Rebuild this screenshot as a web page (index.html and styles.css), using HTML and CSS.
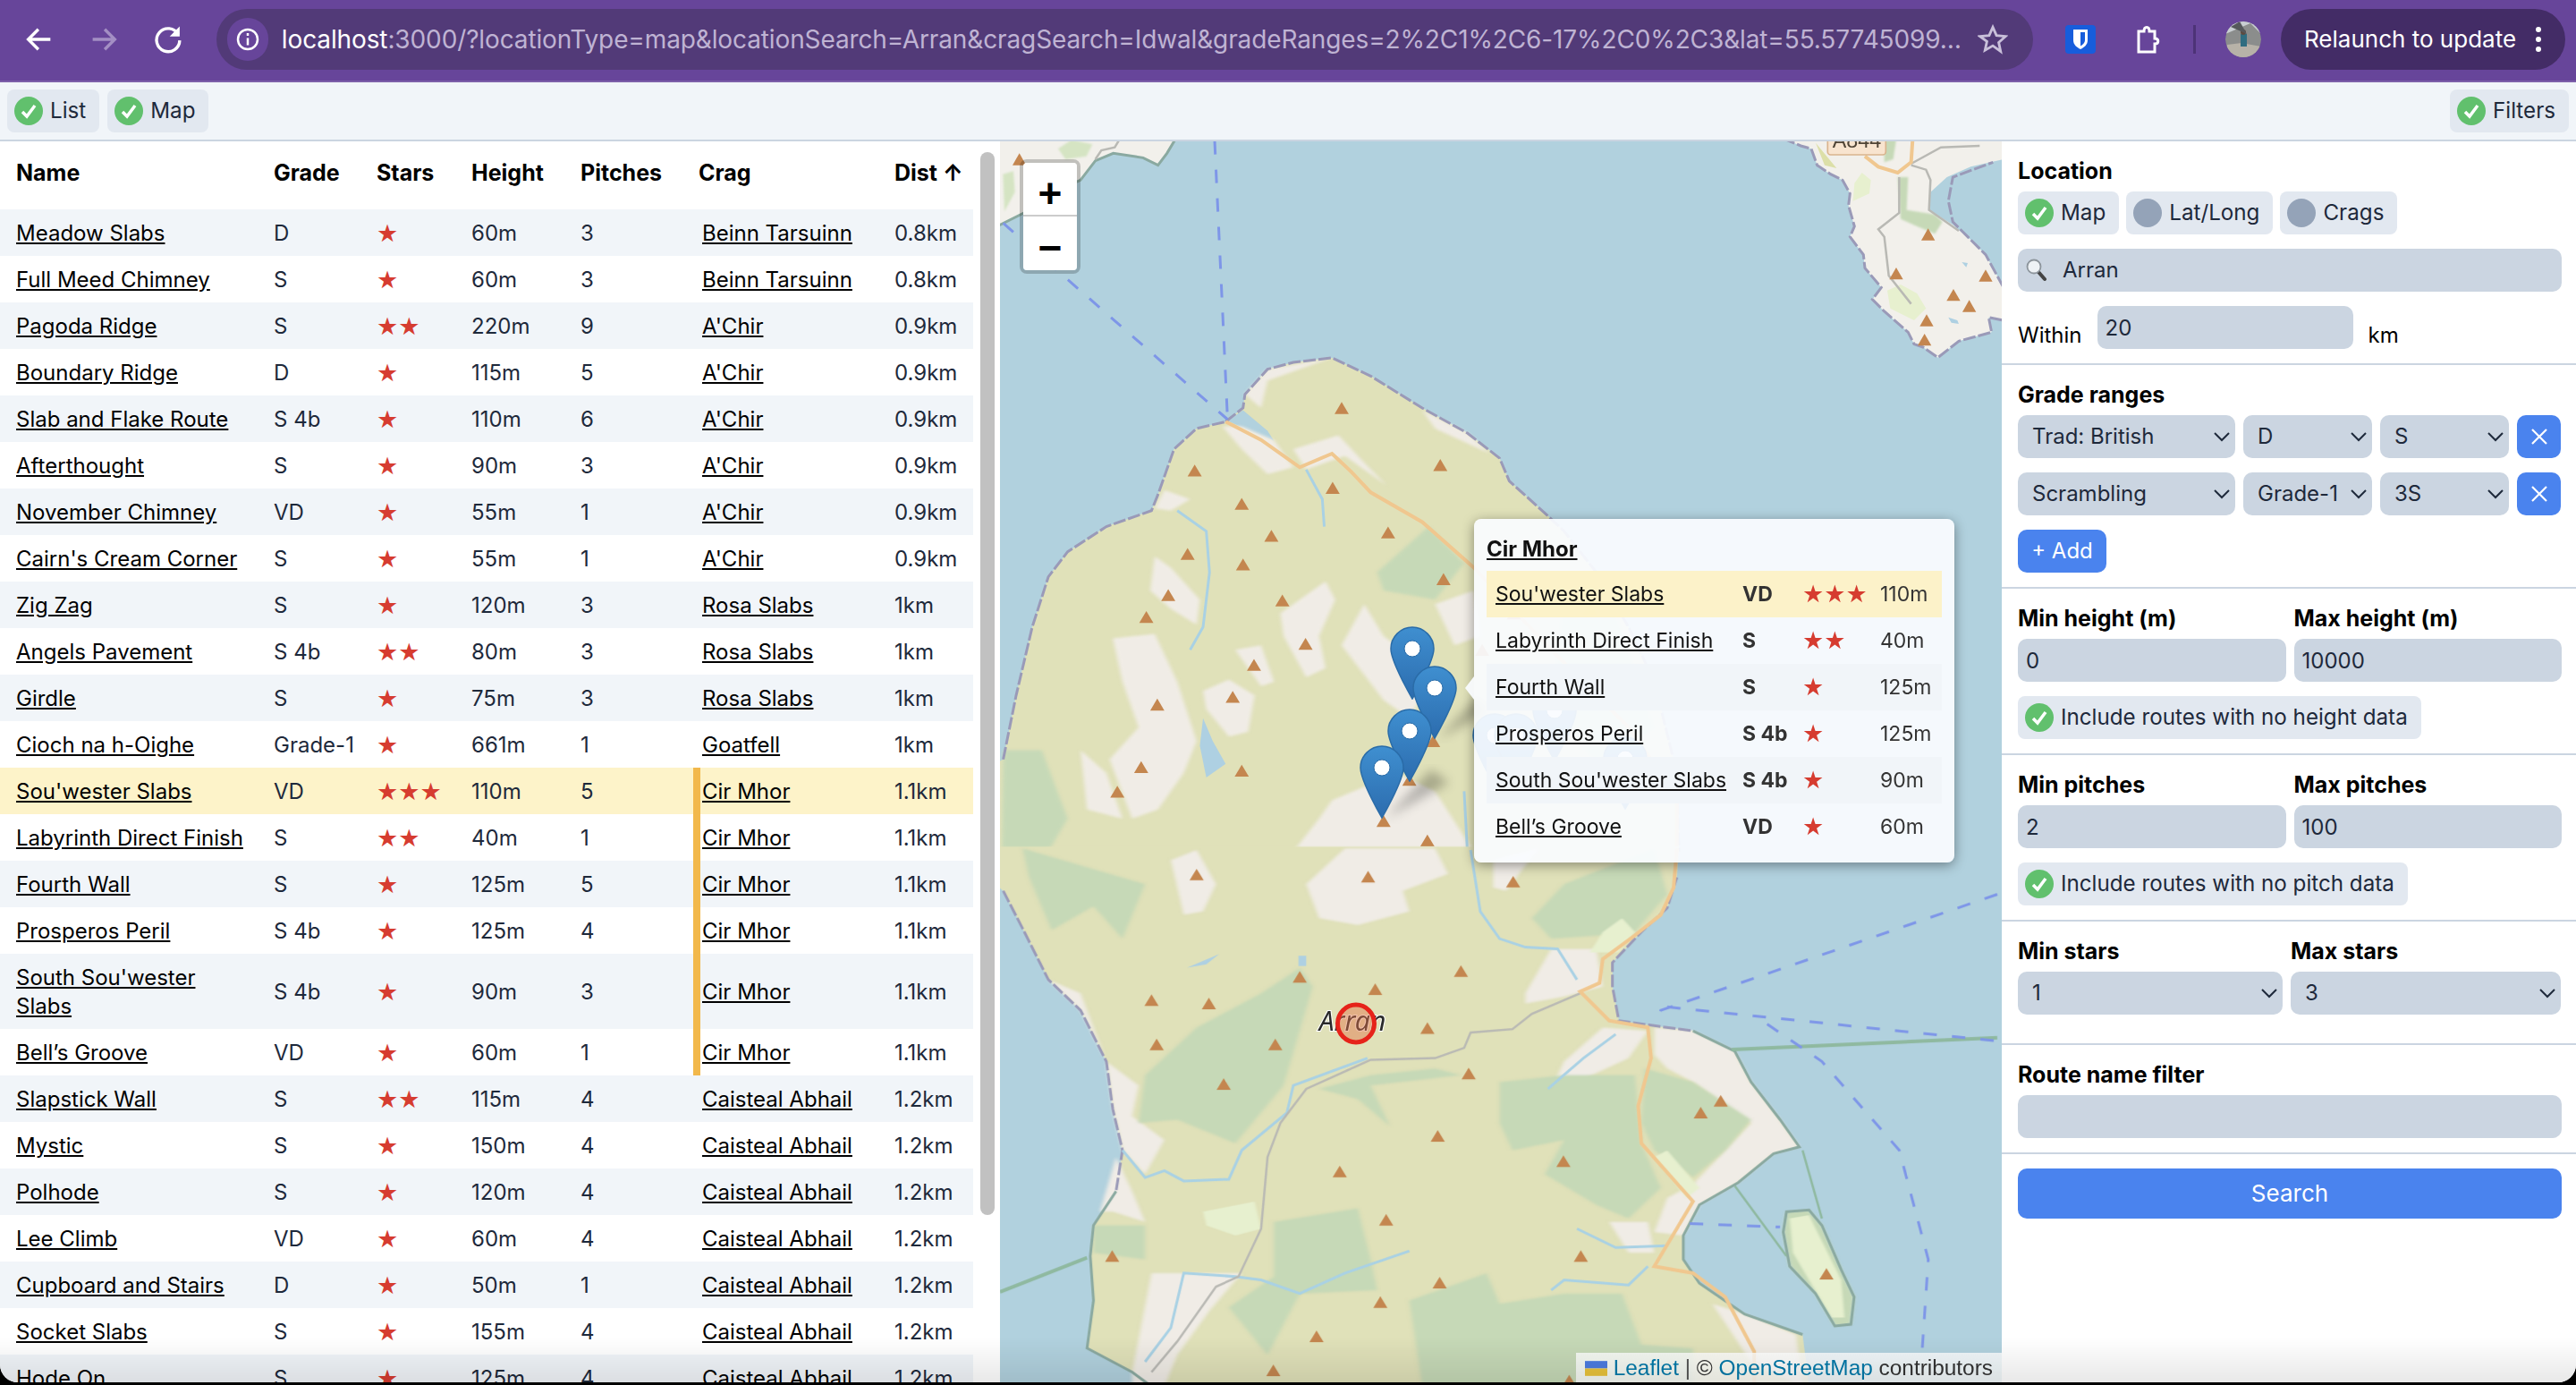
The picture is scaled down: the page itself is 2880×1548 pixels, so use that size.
FILE: index.html
```html
<!DOCTYPE html>
<html lang="en">
<head>
    <meta charset="UTF-8">
    <title>Route search</title>
    <link rel="stylesheet" href="styles.css">
</head>
<body>
    <!-- browser bar -->
    <div class="chrome">
        <svg class="nav-icon" viewBox="0 0 32 32"><path d="M27 16H6M15 6L5 16l10 10"/></svg>
        <svg class="nav-icon dim" viewBox="0 0 32 32"><path d="M5 16h21M17 6l10 10-10 10"/></svg>
        <svg class="nav-icon" viewBox="0 0 32 32"><path d="M26 11a11.5 11.5 0 1 0 1.5 6"/><path class="solid" d="M27.500 3v10h-10z"/></svg>
        <div class="urlbar">
            <span class="site-info"><svg viewBox="0 0 28 28"><circle cx="14" cy="14" r="11"/><path d="M14 12.500v8M14 7v3"/></svg></span>
            <span class="url"><b>localhost</b>:3000/?locationType=map&amp;locationSearch=Arran&amp;cragSearch=Idwal&amp;gradeRanges=2%2C1%2C6-17%2C0%2C3&amp;lat=55.57745099…</span>
            <svg class="star-icon" viewBox="0 0 30 30"><path d="M15 3l3.600 8.200 8.900.9-6.700 5.900 1.900 8.800L15 21.300 7.300 25.800 9.200 17 2.500 12.100l8.900-.9z"/></svg>
        </div>
        <svg class="ext-shield" viewBox="0 0 34 32"><rect width="34" height="32" rx="4"/><path d="M9 5h16v12c0 5-4 8-8 10-4-2-8-5-8-10z"/><path class="inner" d="M17 8h5v9c0 3-2.500 5-5 6.500z"/></svg>
        <svg class="ext-puzzle" viewBox="0 0 32 34"><path d="M6 8h6c0-6 6-6 6 0h6v8c5 0 5 6 0 6v9H6z"/></svg>
        <span class="chrome-sep"></span>
        <svg class="avatar" viewBox="0 0 40 40">
            <circle cx="20" cy="20" r="20" fill="#8b8d8c"/>
            <path d="M0 14L28 2l12 12v-14H0z" fill="#c9ced2"/>
            <path d="M2 26l16-2 22 4v12H0z" fill="#b7b2a8"/>
            <rect x="17" y="14" width="7" height="14" fill="#2f6d80"/>
            <circle cx="20" cy="12" r="3" fill="#5d4a3e"/>
            <path d="M6 6l18 8-8-14z" fill="#55585b"/>
        </svg>
        <div class="relaunch">
            <span>Relaunch to update</span>
            <svg viewBox="0 0 8 32"><circle cx="4" cy="5" r="3"/><circle cx="4" cy="16" r="3"/><circle cx="4" cy="27" r="3"/></svg>
        </div>
    </div>

    <!-- view toggles -->
    <div class="toolbar">
        <button class="toggle"><svg class="tick" viewBox="0 0 32 32"><circle cx="16" cy="16" r="16"/><path d="M9 17l5 5 9-12"/></svg>List</button>
        <button class="toggle"><svg class="tick" viewBox="0 0 32 32"><circle cx="16" cy="16" r="16"/><path d="M9 17l5 5 9-12"/></svg>Map</button>
        <button class="toggle push-right"><svg class="tick" viewBox="0 0 32 32"><circle cx="16" cy="16" r="16"/><path d="M9 17l5 5 9-12"/></svg>Filters</button>
    </div>

    <div class="main">
        <!-- results list -->
        <div class="list-pane">
            <table class="routes">
                <colgroup>
                    <col class="c-name"><col class="c-grade"><col class="c-stars"><col class="c-height"><col class="c-pitches"><col class="c-crag"><col class="c-dist">
                </colgroup>
                <thead>
                    <tr><th class="first">Name</th><th>Grade</th><th>Stars</th><th>Height</th><th>Pitches</th><th class="crag-head">Crag</th><th>Dist ↑</th></tr>
                </thead>
                <tbody>
                    <tr><td class="first"><a href="#">Meadow Slabs</a></td><td>D</td><td class="stars">★</td><td>60m</td><td>3</td><td class="crag"><a href="#">Beinn Tarsuinn</a></td><td>0.8km</td></tr>
                    <tr><td class="first"><a href="#">Full Meed Chimney</a></td><td>S</td><td class="stars">★</td><td>60m</td><td>3</td><td class="crag"><a href="#">Beinn Tarsuinn</a></td><td>0.8km</td></tr>
                    <tr><td class="first"><a href="#">Pagoda Ridge</a></td><td>S</td><td class="stars">★★</td><td>220m</td><td>9</td><td class="crag"><a href="#">A'Chir</a></td><td>0.9km</td></tr>
                    <tr><td class="first"><a href="#">Boundary Ridge</a></td><td>D</td><td class="stars">★</td><td>115m</td><td>5</td><td class="crag"><a href="#">A'Chir</a></td><td>0.9km</td></tr>
                    <tr><td class="first"><a href="#">Slab and Flake Route</a></td><td>S 4b</td><td class="stars">★</td><td>110m</td><td>6</td><td class="crag"><a href="#">A'Chir</a></td><td>0.9km</td></tr>
                    <tr><td class="first"><a href="#">Afterthought</a></td><td>S</td><td class="stars">★</td><td>90m</td><td>3</td><td class="crag"><a href="#">A'Chir</a></td><td>0.9km</td></tr>
                    <tr><td class="first"><a href="#">November Chimney</a></td><td>VD</td><td class="stars">★</td><td>55m</td><td>1</td><td class="crag"><a href="#">A'Chir</a></td><td>0.9km</td></tr>
                    <tr><td class="first"><a href="#">Cairn's Cream Corner</a></td><td>S</td><td class="stars">★</td><td>55m</td><td>1</td><td class="crag"><a href="#">A'Chir</a></td><td>0.9km</td></tr>
                    <tr><td class="first"><a href="#">Zig Zag</a></td><td>S</td><td class="stars">★</td><td>120m</td><td>3</td><td class="crag"><a href="#">Rosa Slabs</a></td><td>1km</td></tr>
                    <tr><td class="first"><a href="#">Angels Pavement</a></td><td>S 4b</td><td class="stars">★★</td><td>80m</td><td>3</td><td class="crag"><a href="#">Rosa Slabs</a></td><td>1km</td></tr>
                    <tr><td class="first"><a href="#">Girdle</a></td><td>S</td><td class="stars">★</td><td>75m</td><td>3</td><td class="crag"><a href="#">Rosa Slabs</a></td><td>1km</td></tr>
                    <tr><td class="first"><a href="#">Cioch na h-Oighe</a></td><td>Grade-1</td><td class="stars">★</td><td>661m</td><td>1</td><td class="crag"><a href="#">Goatfell</a></td><td>1km</td></tr>
                    <tr class="picked"><td class="first"><a href="#">Sou'wester Slabs</a></td><td>VD</td><td class="stars">★★★</td><td>110m</td><td>5</td><td class="crag on"><a href="#">Cir Mhor</a></td><td>1.1km</td></tr>
                    <tr><td class="first"><a href="#">Labyrinth Direct Finish</a></td><td>S</td><td class="stars">★★</td><td>40m</td><td>1</td><td class="crag on"><a href="#">Cir Mhor</a></td><td>1.1km</td></tr>
                    <tr><td class="first"><a href="#">Fourth Wall</a></td><td>S</td><td class="stars">★</td><td>125m</td><td>5</td><td class="crag on"><a href="#">Cir Mhor</a></td><td>1.1km</td></tr>
                    <tr><td class="first"><a href="#">Prosperos Peril</a></td><td>S 4b</td><td class="stars">★</td><td>125m</td><td>4</td><td class="crag on"><a href="#">Cir Mhor</a></td><td>1.1km</td></tr>
                    <tr><td class="first"><a href="#">South Sou'wester Slabs</a></td><td>S 4b</td><td class="stars">★</td><td>90m</td><td>3</td><td class="crag on"><a href="#">Cir Mhor</a></td><td>1.1km</td></tr>
                    <tr><td class="first"><a href="#">Bell’s Groove</a></td><td>VD</td><td class="stars">★</td><td>60m</td><td>1</td><td class="crag on"><a href="#">Cir Mhor</a></td><td>1.1km</td></tr>
                    <tr><td class="first"><a href="#">Slapstick Wall</a></td><td>S</td><td class="stars">★★</td><td>115m</td><td>4</td><td class="crag"><a href="#">Caisteal Abhail</a></td><td>1.2km</td></tr>
                    <tr><td class="first"><a href="#">Mystic</a></td><td>S</td><td class="stars">★</td><td>150m</td><td>4</td><td class="crag"><a href="#">Caisteal Abhail</a></td><td>1.2km</td></tr>
                    <tr><td class="first"><a href="#">Polhode</a></td><td>S</td><td class="stars">★</td><td>120m</td><td>4</td><td class="crag"><a href="#">Caisteal Abhail</a></td><td>1.2km</td></tr>
                    <tr><td class="first"><a href="#">Lee Climb</a></td><td>VD</td><td class="stars">★</td><td>60m</td><td>4</td><td class="crag"><a href="#">Caisteal Abhail</a></td><td>1.2km</td></tr>
                    <tr><td class="first"><a href="#">Cupboard and Stairs</a></td><td>D</td><td class="stars">★</td><td>50m</td><td>1</td><td class="crag"><a href="#">Caisteal Abhail</a></td><td>1.2km</td></tr>
                    <tr><td class="first"><a href="#">Socket Slabs</a></td><td>S</td><td class="stars">★</td><td>155m</td><td>4</td><td class="crag"><a href="#">Caisteal Abhail</a></td><td>1.2km</td></tr>
                    <tr><td class="first"><a href="#">Hode On</a></td><td>S</td><td class="stars">★</td><td>125m</td><td>4</td><td class="crag"><a href="#">Caisteal Abhail</a></td><td>1.2km</td></tr>
                </tbody>
            </table>
            <div class="gutter"><div class="thumb"></div></div>
        </div>

        <!-- map -->
        <div class="map">
            <svg class="tiles" viewBox="1118 158 1120 1388">
                <defs>
                    <path id="t5" d="M0-13L11 13H-11Z"/>
                    <path id="t6" d="M0-17L11 17H-11Z"/>
                    <path id="t3" d="M0-20L23 20H-23Z"/>
                    <linearGradient id="pinfill" x1="0" y1="0" x2="0" y2="1">
                        <stop offset="0" stop-color="#3f8fd0"/>
                        <stop offset="1" stop-color="#2c6cae"/>
                    </linearGradient>
                    <symbol id="pin" viewBox="0 0 50 82" width="50" height="82">
                        <path fill="url(#pinfill)" stroke="#2a6ca8" stroke-width="1.500" d="M25 1C12 1 1 12 1 25c0 15 24 56 24 56s24-41 24-56C49 12 38 1 25 1z"/>
                        <circle cx="25" cy="25" r="9" fill="#fff" stroke="#2a6ca8"/>
                    </symbol>
                    <filter id="soft"><feGaussianBlur stdDeviation="6"/></filter>
                </defs>
                <rect x="1118" y="158" width="1120" height="1388" fill="#b1d1de"/>

                <!-- land in the top left corner -->
                <g class="tile" transform="translate(1118,158) scale(.3333)">
                    <polygon class="shore" points="-10,-10 590,-10 560,40 530,80 480,55 380,40 320,65 270,130 180,170 80,240 -10,285"/>
                    <polygon class="pale-wood" points="195,25 240,-5 310,10 290,50 220,60"/>
                    <polygon class="pale-wood" points="10,110 45,100 50,170 15,235"/>
                    <polyline class="coast-line" points="590,-10 560,40 530,80 480,55 380,40 320,65 270,130 180,170 80,240 -10,285"/>
                    <polyline class="track" points="320,60 340,30 385,20 400,-5"/>
                    <use href="#t3" x="65" y="60"/>
                </g>

                <!-- Bute -->
                <g class="tile" transform="translate(1950,158) scale(.3333)">
                    <polygon class="shore" points="130,-10 190,15 225,25 245,80 290,110 330,130 355,175 350,215 370,285 355,320 400,380 405,425 460,490 430,530 470,570 550,640 570,680 600,690 650,725 720,670 830,640 820,590 870,600 870,490 810,380 760,330 700,280 620,230 625,170 680,120 760,85 870,60 870,-10"/>
                    <polygon class="wood" points="515,120 550,120 545,230 640,245 665,270 640,310 580,285 525,260"/>
                    <polygon class="wood" points="470,-5 510,-5 500,60 470,70"/>
                    <polygon class="pale" points="370,140 395,105 425,130 420,175 365,200"/>
                    <polygon class="pale" points="480,500 525,480 580,510 610,560 570,600 490,560"/>
                    <polygon class="moor" points="240,5 310,90 270,80"/>
                    <polygon class="tarn" points="685,590 715,600 720,612 695,608"/>
                    <polygon class="tarn" points="730,405 750,408 745,422"/>
                    <polyline class="coast-line purple" points="130,-10 190,15 225,25 245,80 290,110 330,130 355,175 350,215 370,285 355,320 400,380 405,425 460,490 430,530 470,570 550,640 570,680 600,690 650,725 720,670 830,640 820,590 870,600"/>
                    <polyline class="coast-line purple" points="870,490 810,380 760,330 700,270 685,200 700,120 835,70"/>
                    <polyline class="track" points="560,80 610,95 625,130 620,230 720,300"/>
                    <polyline class="track" points="520,120 520,240 450,295 470,320 485,450 560,545"/>
                    <polyline class="track" points="560,75 660,20 790,15"/>
                    <polyline class="road" points="405,50 450,85 515,105 560,70 565,-5"/>
                    <rect class="shield" x="280" y="-50" width="195" height="95" rx="10"/>
                    <text class="shield-text" x="378" y="22">A844</text>
                    <use href="#t3" x="617" y="312"/><use href="#t3" x="510" y="443"/><use href="#t3" x="810" y="450"/><use href="#t3" x="702" y="515"/>
                    <use href="#t3" x="755" y="552"/><use href="#t3" x="612" y="600"/><use href="#t3" x="605" y="665"/>
                </g>

                <!-- upper half of the island -->
                <g class="tile" transform="translate(1100,150) scale(.7207,.51)">
                    <polygon class="land" points="375,630 402,600 405,570 440,515 480,500 540,490 600,530 680,600 750,655 800,710 815,760 870,830 900,870 950,960 1000,1080 1040,1200 1075,1400 1078,1572 -10,1572 -10,1400 30,1370 50,1230 75,1080 100,970 130,915 190,860 260,825 270,790 295,690 330,645"/>
                    <polygon class="sea" points="378,628 402,605 440,650 450,672 420,655"/>
                    <polygon class="rock" points="405,570 440,515 540,490 500,510 440,540 430,600"/>
                    <polygon class="rock" points="680,605 750,655 785,700 700,645"/>
                    <polygon class="rock" points="480,690 550,660 590,720 625,770 560,705 500,735"/>
                    <polygon class="rock" points="400,640 450,670 480,730 440,745 400,690 370,640"/>
                    <polygon class="rock" points="280,780 320,800 290,825 265,820"/>
                    <polygon class="rock" points="265,925 290,950 335,1020 330,1075 290,1040 258,1000"/>
                    <polygon class="rock" points="200,1105 265,1095 300,1200 330,1330 310,1400 270,1480 230,1500 195,1370 240,1300 215,1200"/>
                    <polygon class="rock" points="340,1220 380,1195 420,1230 410,1310 380,1320 345,1260"/>
                    <polygon class="rock" points="390,1130 430,1120 450,1200 430,1210"/>
                    <polygon class="rock" points="460,1050 530,980 545,1020 520,1100 530,1170 500,1190 465,1100"/>
                    <polygon class="rock" points="555,1120 590,1030 620,1100 700,1180 660,1280 620,1240"/>
                    <polygon class="rock" points="150,1350 190,1400 215,1500 160,1480"/>
                    <polygon class="rock" points="540,1460 640,1400 700,1440 760,1572 480,1572 520,1500"/>
                    <polygon class="rock" points="700,1030 760,1000 770,1100 730,1120"/>
                    <polygon class="wood" points="610,960 690,860 745,940 700,1020 620,1000"/>
                    <polygon class="wood" points="30,1350 90,1350 130,1500 100,1572 28,1572"/>
                    <polygon class="wood" points="900,1000 960,960 1040,1300 960,1400 880,1250"/>
                    <polyline class="coast-line purple" points="375,630 402,600 405,570 440,515 480,500 540,490 600,530 680,600 750,655 800,710 815,760 870,830 900,870 950,960 1000,1080 1040,1200 1075,1400 1078,1572"/>
                    <polyline class="coast-line purple" points="30,1370 50,1230 75,1080 100,970 130,915 190,860 260,825 270,790 295,690 330,645 375,630"/>
                    <polyline class="river" points="300,825 345,870 350,960 340,1080 320,1130"/>
                    <polyline class="river" points="500,735 525,800 528,860"/>
                    <polygon class="tarn" points="340,1280 355,1330 375,1380 345,1410 335,1340"/>
                    <polyline class="road" points="375,630 430,670 490,730 540,700 570,740 600,785 680,850 760,950 880,1130 1000,1300 1075,1450 1075,1572"/>
                    <polyline class="river" points="745,1440 750,1572"/>
                    <polyline class="ferry" points="358,15 378,625"/>
                    <polyline class="ferry" points="30,195 378,625"/>
                    <use href="#t5" x="555" y="600"/><use href="#t5" x="708" y="725"/><use href="#t5" x="327" y="737"/><use href="#t5" x="541" y="775"/>
                    <use href="#t5" x="400" y="810"/><use href="#t5" x="627" y="873"/><use href="#t5" x="446" y="880"/><use href="#t5" x="316" y="920"/>
                    <use href="#t5" x="402" y="943"/><use href="#t5" x="713" y="975"/><use href="#t5" x="286" y="1010"/><use href="#t5" x="463" y="1022"/>
                    <use href="#t5" x="252" y="1058"/><use href="#t5" x="499" y="1117"/><use href="#t5" x="419" y="1163"/><use href="#t5" x="269" y="1250"/>
                    <use href="#t5" x="386" y="1233"/><use href="#t5" x="400" y="1395"/><use href="#t5" x="244" y="1387"/><use href="#t5" x="207" y="1441"/>
                    <use href="#t5" x="697" y="1330"/><use href="#t5" x="660" y="1415"/><use href="#t5" x="620" y="1505"/><use href="#t5" x="688" y="1548"/>
                    <use href="#t5" x="773" y="1130"/><use href="#t5" x="822" y="1050"/><use href="#t5" x="940" y="1040"/>
                </g>

                <!-- lower half of the island -->
                <g class="tile" transform="translate(1100,950) scale(.7207,.3814)">
                    <polygon class="land" points="-10,-10 1078,-10 1075,80 1060,170 1020,240 975,330 975,400 985,500 1040,515 1100,530 1165,590 1190,680 1235,790 1265,870 1225,890 1170,975 1110,1040 1085,1130 1085,1200 1110,1270 1180,1360 1270,1420 1280,1572 260,1572 230,1530 160,1460 170,1320 165,1190 170,1100 205,1000 215,880 200,760 190,620 150,470 100,380 60,230 30,120 -10,60"/>
                    <polygon class="rock" points="290,30 330,0 360,100 340,180 310,190"/>
                    <polygon class="rock" points="500,100 560,-5 700,-5 720,70 650,120 660,180 580,220 520,200"/>
                    <polygon class="rock" points="790,30 860,-5 810,120 790,110"/>
                    <polygon class="rock" points="100,380 150,420 190,620 240,690 230,780 280,850 250,950 215,880 200,760 190,620 150,470"/>
                    <polygon class="rock" points="260,1240 400,1240 350,1350 300,1480 280,1572 230,1572 230,1530"/>
                    <polygon class="rock" points="880,290 950,290 960,400 900,430 840,450 840,420"/>
                    <polygon class="rock" points="205,900 230,1000 250,1090 200,1060 180,1060"/>
                    <polygon class="rock" points="960,520 1030,530 1000,610 920,680 880,700 900,620"/>
                    <polygon class="rock" points="1040,520 1100,530 1165,590 1190,680 1235,790 1265,870 1225,890 1170,975 1110,1040 1085,1130 1040,1120 1060,1020 1100,980 1150,880 1190,800 1100,680 1060,640 1040,600"/>
                    <polygon class="rock" points="970,1090 1030,1090 1040,1180 1000,1180"/>
                    <polygon class="rock" points="1130,1330 1180,1360 1260,1420 1270,1572 1190,1500"/>
                    <polygon class="wood" points="60,-5 250,100 215,260 170,165 105,235 70,80"/>
                    <polygon class="wood" points="490,345 510,400 465,690 390,860 300,790 240,800 250,660 330,520 430,420"/>
                    <polygon class="wood" points="900,100 1040,-5 1060,130 1010,240 960,250 880,260 850,200"/>
                    <polygon class="wood" points="800,680 900,660 1010,660 1020,860 1050,990 1000,1080 950,1040 870,950 900,850 820,880 800,800"/>
                    <polygon class="wood" points="1025,640 1100,680 1190,790 1150,880 1100,960 1040,880 1020,800"/>
                    <polygon class="wood" points="450,1090 580,1050 600,1200 610,1290 490,1300 440,1480 380,1340 450,1250"/>
                    <polygon class="wood" points="660,1320 780,1240 800,1330 900,1300 990,1300 1020,1450 1100,1460 1100,1572 680,1572"/>
                    <polygon class="wood" points="170,1100 250,1100 250,1200 170,1180"/>
                    <polygon class="wood" points="520,700 600,660 700,640 740,660 600,690 630,810 580,730"/>
                    <polygon class="pale" points="340,1060 420,1030 430,1110 390,1130 345,1100"/>
                    <polygon class="pale" points="960,240 990,200 1010,240 985,300 940,300"/>
                    <polygon class="pale" points="1040,900 1060,880 1110,990 1090,1020"/>
                    <polygon class="wood" points="1245,1060 1280,1055 1300,1100 1330,1230 1350,1310 1345,1390 1320,1395 1290,1300 1250,1220 1240,1120"/>
                    <polygon class="pale" points="1250,1080 1280,1070 1330,1260 1335,1370 1315,1370 1280,1260 1255,1180"/>
                    <polygon class="coast-line" points="1245,1060 1280,1055 1300,1100 1330,1230 1350,1310 1345,1390 1320,1395 1290,1300 1250,1220 1240,1120"/>
                    <polyline class="coast-line purple" points="30,120 60,230 100,380 150,470 190,620 200,760 215,880 205,1000"/>
                    <polyline class="coast-line" points="205,1000 170,1100 165,1190 170,1320 160,1460 230,1530 260,1572"/>
                    <polyline class="coast-line purple" points="1075,80 1060,170 1020,240 975,330 975,400 985,500 1040,515 1100,530"/>
                    <polyline class="coast-line" points="1100,530 1165,590 1190,680 1235,790 1265,870 1225,890 1170,975 1110,1040 1085,1130 1085,1200 1110,1270 1180,1360 1270,1420"/>
                    <polyline class="river" points="755,0 770,180 800,260 840,285 890,290 920,380"/>
                    <polyline class="river" points="595,610 480,690 470,770 400,880 380,965 310,970 280,940 250,960 215,880"/>
                    <polyline class="river" points="660,1175 560,1240 490,1300 430,1260 390,1250 310,1240 290,1400 250,1500"/>
                    <polyline class="river" points="880,1290 900,1260 1000,1275 1030,1220"/>
                    <polyline class="river" points="875,700 930,610 980,540"/>
                    <polyline class="river" points="920,1110 980,1165 1060,1160"/>
                    <polygon class="tarn" points="488,310 500,310 500,340 488,340"/>
                    <polygon class="tarn" points="315,345 365,305 345,335"/>
                    <polyline class="track" points="925,420 850,480 820,525 755,535 745,580 700,610 600,615 500,700 460,800 440,900 430,1110 395,1250 360,1280 300,1440 260,1530"/>
                    <polyline class="road" points="1075,-5 1070,110 1050,190 1010,250 960,320 955,390 925,415 970,500 1030,520 1035,610 1015,750 1020,860 1100,1030 1040,1220 1100,1240 1150,1310 1195,1470 1195,1572"/>
                    <polyline class="border" points="1160,585 1572,550"/>
                    <polyline class="border" points="160,1195 25,1295"/>
                    <polyline class="border thin" points="1270,880 1300,1080"/>
                    <polyline class="border thin" points="1165,985 1245,1190"/>
                    <polyline class="ferry" points="1572,130 1050,470 1045,500"/>
                    <polyline class="ferry" points="1060,460 1572,560"/>
                    <polyline class="ferry" points="1215,510 1300,620 1420,880 1465,1200 1455,1480"/>
                    <polyline class="ferry" points="1095,1095 1235,1105"/>
                    <use href="#t6" x="330" y="72"/><use href="#t6" x="596" y="78"/><use href="#t6" x="821" y="93"/><use href="#t6" x="490" y="372"/>
                    <use href="#t6" x="740" y="355"/><use href="#t6" x="607" y="408"/><use href="#t6" x="260" y="440"/><use href="#t6" x="349" y="450"/>
                    <use href="#t6" x="688" y="522"/><use href="#t6" x="268" y="570"/><use href="#t6" x="452" y="570"/><use href="#t6" x="752" y="655"/>
                    <use href="#t6" x="372" y="686"/><use href="#t6" x="1143" y="735"/><use href="#t6" x="1112" y="770"/><use href="#t6" x="704" y="838"/>
                    <use href="#t6" x="899" y="912"/><use href="#t6" x="552" y="942"/><use href="#t6" x="624" y="1084"/><use href="#t6" x="199" y="1190"/>
                    <use href="#t6" x="926" y="1190"/><use href="#t6" x="707" y="1268"/><use href="#t6" x="1307" y="1242"/><use href="#t6" x="615" y="1325"/>
                    <use href="#t6" x="516" y="1425"/><use href="#t6" x="449" y="1525"/><use href="#t6" x="908" y="1555"/>
                </g>

                <text class="place" x="1512" y="1152">Arran</text>
                <ellipse class="ring" cx="1516" cy="1144" rx="20.500" ry="21"/>
                <polygon class="pin-shadow" points="1549,915 1600,860 1620,875"/>
                <polygon class="pin-shadow" points="1608,826 1650,780 1665,795"/>
                <use href="#pin" x="1713" y="769"/>
                <use href="#pin" x="1646" y="797"/>
                <use href="#pin" x="1670" y="797"/>
                <use href="#pin" x="1792" y="823"/>
                <use href="#pin" x="1554" y="700"/>
                <use href="#pin" x="1579" y="744"/>
                <use href="#pin" x="1551" y="792"/>
                <use href="#pin" x="1520" y="833"/>
            </svg>

            <div class="zoom-ctl">
                <span class="zoom-btn">+</span>
                <span class="zoom-btn">−</span>
            </div>

            <div class="popup">
                <a class="popup-title" href="#">Cir Mhor</a>
                <div class="popup-row picked"><a href="#">Sou'wester Slabs</a><b>VD</b><span class="stars">★★★</span><span>110m</span></div>
                <div class="popup-row"><a href="#">Labyrinth Direct Finish</a><b>S</b><span class="stars">★★</span><span>40m</span></div>
                <div class="popup-row alt"><a href="#">Fourth Wall</a><b>S</b><span class="stars">★</span><span>125m</span></div>
                <div class="popup-row"><a href="#">Prosperos Peril</a><b>S 4b</b><span class="stars">★</span><span>125m</span></div>
                <div class="popup-row alt"><a href="#">South Sou'wester Slabs</a><b>S 4b</b><span class="stars">★</span><span>90m</span></div>
                <div class="popup-row"><a href="#">Bell’s Groove</a><b>VD</b><span class="stars">★</span><span>60m</span></div>
            </div>

            <div class="attribution">
                <svg viewBox="0 0 24 16"><rect width="24" height="8" fill="#4c7be0"/><rect y="8" width="24" height="8" fill="#e8c23a"/></svg>
                <a href="#">Leaflet</a> <span class="attr-sep">|</span> © <a href="#">OpenStreetMap</a> contributors
            </div>
        </div>

        <!-- filters -->
        <div class="filters">
            <section class="group">
                <h3>Location</h3>
                <div class="btn-row">
                    <button class="toggle"><svg class="tick" viewBox="0 0 32 32"><circle cx="16" cy="16" r="16"/><path d="M9 17l5 5 9-12"/></svg>Map</button>
                    <button class="toggle"><span class="off-dot"></span>Lat/Long</button>
                    <button class="toggle"><span class="off-dot"></span>Crags</button>
                </div>
                <div class="search-box">
                    <svg viewBox="0 0 24 26"><path d="M14 15l7 8" stroke="#444" stroke-width="4" stroke-linecap="round"/><circle cx="9" cy="9" r="7.500" fill="#eef2f5" stroke="#8d959c" stroke-width="1.800"/></svg>
                    <input class="bare" type="text" value="Arran">
                </div>
                <div class="within">
                    <span>Within</span>
                    <input class="field within-input" type="text" value="20">
                    <span>km</span>
                </div>
            </section>

            <section class="group">
                <h3>Grade ranges</h3>
                <div class="grade-row">
                    <select class="field pick"><option>Trad: British</option></select>
                    <select class="field pick"><option>D</option></select>
                    <select class="field pick"><option>S</option></select>
                    <button class="blue-btn x-btn"><svg viewBox="0 0 20 20"><path d="M2 2l16 16M18 2L2 18"/></svg></button>
                </div>
                <div class="grade-row">
                    <select class="field pick"><option>Scrambling</option></select>
                    <select class="field pick"><option>Grade-1</option></select>
                    <select class="field pick"><option>3S</option></select>
                    <button class="blue-btn x-btn"><svg viewBox="0 0 20 20"><path d="M2 2l16 16M18 2L2 18"/></svg></button>
                </div>
                <div><button class="blue-btn add-btn">+ Add</button></div>
            </section>

            <section class="group">
                <div class="two-col">
                    <label><h3>Min height (m)</h3><input class="field" type="text" value="0"></label>
                    <label><h3>Max height (m)</h3><input class="field" type="text" value="10000"></label>
                </div>
                <div><button class="toggle"><svg class="tick" viewBox="0 0 32 32"><circle cx="16" cy="16" r="16"/><path d="M9 17l5 5 9-12"/></svg>Include routes with no height data</button></div>
            </section>

            <section class="group">
                <div class="two-col">
                    <label><h3>Min pitches</h3><input class="field" type="text" value="2"></label>
                    <label><h3>Max pitches</h3><input class="field" type="text" value="100"></label>
                </div>
                <div><button class="toggle"><svg class="tick" viewBox="0 0 32 32"><circle cx="16" cy="16" r="16"/><path d="M9 17l5 5 9-12"/></svg>Include routes with no pitch data</button></div>
            </section>

            <section class="group tall">
                <div class="two-col stars-col">
                    <label><h3>Min stars</h3><select class="field pick"><option>1</option></select></label>
                    <label><h3>Max stars</h3><select class="field pick"><option>3</option></select></label>
                </div>
            </section>

            <section class="group">
                <label><h3>Route name filter</h3><input class="field" type="text"></label>
            </section>

            <section class="group last">
                <button class="blue-btn search-btn">Search</button>
            </section>
        </div>
        <div class="screen-fade"></div>
    </div>
</body>
</html>
```

FILE: styles.css
```css
* {
    box-sizing: border-box;
}

html,
body {
    margin: 0;
    padding: 0;
    background: #000;
}

body {
    width: 2880px;
    height: 1545px;
    overflow: hidden;
    font-family: Inter, "Noto Sans", sans-serif;
    font-size: 24px;
    line-height: 32px;
    color: #000;
    display: flex;
    flex-direction: column;
    border-radius: 0 0 20px 20px;
}

a {
    color: inherit;
}

/* browser bar */
.chrome {
    height: 92px;
    flex: none;
    display: flex;
    align-items: center;
    padding: 0 12px 2px 26px;
    background: #67459a;
    border-bottom: 2px solid #7c5fa9;
}

.nav-icon {
    width: 36px;
    height: 36px;
    margin-right: 36px;
    fill: none;
    stroke: #fff;
    stroke-width: 3;
}

.nav-icon.dim {
    stroke: #a48fc4;
}

.nav-icon .solid {
    fill: #fff;
    stroke: none;
}

.urlbar {
    width: 2034px;
    height: 68px;
    display: flex;
    align-items: center;
    padding: 0 28px 0 12px;
    border-radius: 34px;
    background: #523a78;
}

.site-info {
    width: 46px;
    height: 48px;
    margin-right: 15px;
    flex: none;
    display: flex;
    align-items: center;
    justify-content: center;
    border-radius: 24px;
    background: #67459a;
}

.site-info svg {
    width: 28px;
    height: 28px;
    fill: none;
    stroke: #fff;
    stroke-width: 2.500;
}

.url {
    flex: 1;
    white-space: nowrap;
    font-size: 28px;
    letter-spacing: -.12px;
    color: #bfb3d3;
}

.url b {
    font-weight: 400;
    color: #fff;
}

.star-icon {
    width: 34px;
    height: 34px;
    flex: none;
    margin-left: 14px;
    fill: none;
    stroke: #c9c0da;
    stroke-width: 2.500;
}

.ext-shield {
    width: 34px;
    height: 32px;
    margin-left: 36px;
    flex: none;
}

.ext-shield rect {
    fill: #175ddc;
}

.ext-shield path {
    fill: #fff;
}

.ext-shield .inner {
    fill: #175ddc;
}

.ext-puzzle {
    width: 32px;
    height: 34px;
    margin-left: 42px;
    flex: none;
    fill: none;
    stroke: #fff;
    stroke-width: 3;
}

.chrome-sep {
    width: 3px;
    height: 32px;
    margin-left: 35px;
    background: #4d3377;
}

.avatar {
    width: 40px;
    height: 40px;
    margin-left: 33px;
    flex: none;
    border-radius: 50%;
}

.relaunch {
    width: 318px;
    height: 68px;
    margin-left: 22px;
    flex: none;
    display: flex;
    align-items: center;
    padding: 0 26px;
    justify-content: space-between;
    border-radius: 34px;
    background: #432c66;
    color: #fff;
    font-size: 26px;
}

.relaunch svg {
    width: 8px;
    height: 32px;
    fill: #fff;
}

/* toolbar */
.toolbar {
    height: 66px;
    flex: none;
    display: flex;
    align-items: center;
    gap: 9px;
    padding: 0 8px;
    background: #f1f5f9;
    border-bottom: 2px solid #cbd5e1;
}

.push-right {
    margin-left: auto;
}

.toggle {
    height: 48px;
    display: inline-flex;
    align-items: center;
    gap: 8px;
    padding: 0 15px 0 8px;
    border: 0;
    border-radius: 8px;
    background: #e2e8f0;
    color: #1e293b;
    font: inherit;
    font-size: 24.2px;
    white-space: nowrap;
}

.tick {
    width: 32px;
    height: 32px;
    flex: none;
}

.tick circle {
    fill: #61c06d;
}

.tick path {
    fill: none;
    stroke: #fff;
    stroke-width: 3.500;
}

.off-dot {
    width: 32px;
    height: 32px;
    flex: none;
    border-radius: 50%;
    background: #94a3b8;
}

/* main row */
.main {
    flex: 1;
    min-height: 0;
    display: flex;
    position: relative;
    background: #fff;
}

.screen-fade {
    position: absolute;
    left: 0;
    right: 0;
    bottom: 0;
    height: 50px;
    background: linear-gradient(rgba(0, 0, 0, 0), rgba(0, 0, 0, .09));
    pointer-events: none;
}

.list-pane {
    width: 1118px;
    flex: none;
    display: flex;
    overflow: hidden;
}

.routes {
    width: 1088px;
    flex: none;
    align-self: flex-start;
    table-layout: fixed;
    border-collapse: separate;
    border-spacing: 0;
}

.c-name { width: 296px; }
.c-grade { width: 115px; }
.c-stars { width: 106px; }
.c-height { width: 122px; }
.c-pitches { width: 136px; }
.c-crag { width: 215px; }
.c-dist { width: 98px; }

.routes th {
    height: 76px;
    padding: 0 0 6px 10px;
    text-align: left;
    font-size: 25px;
    font-weight: 700;
    white-space: nowrap;
}

.routes th.first,
.routes td.first {
    padding-left: 18px;
}

.routes td.first {
    padding-right: 14px;
}

.routes th.crag-head {
    padding-left: 6px;
}

.routes td {
    padding: 11px 0 9px 10px;
    vertical-align: middle;
    color: #1e293b;
}

.routes td a {
    color: #000;
}

.routes tbody tr:nth-child(odd) {
    background: #f1f5f9;
}

.routes tbody tr.picked {
    background: #fdf3c9;
}

.routes td.crag {
    padding-left: 2px;
    border-left: 8px solid transparent;
}

.routes td.crag.on {
    border-left-color: #f2b84b;
}

.stars,
.routes td.stars {
    font-family: "DejaVu Sans", sans-serif;
    font-size: 27px;
    color: #d63c30;
    white-space: nowrap;
}

.gutter {
    flex: 1;
    padding: 12px 6px 0 8px;
}

.thumb {
    height: 1188px;
    border-radius: 8px;
    background: #c1c1c1;
}

/* map */
.map {
    width: 1120px;
    flex: none;
    position: relative;
    overflow: hidden;
    background: #b1d1de;
}

.tiles {
    display: block;
    width: 1120px;
    height: 1388px;
}

.tile {
    filter: blur(.8px);
}

.land { fill: #e0e1b9; }
.shore { fill: #f2f0eb; }
.rock { fill: #f0ece6; filter: blur(3px); }
.wood { fill: #c6d9b7; filter: blur(3px); }
.pale-wood { fill: #d5e4c3; filter: blur(3px); }
.pale { fill: #e7f0cf; filter: blur(2px); }
.moor { fill: #dcdfa8; }
.sea { fill: #b1d1de; }
.tarn { fill: #aed0e2; }

.coast-line,
.road,
.track,
.river,
.ferry,
.border {
    fill: none;
    vector-effect: non-scaling-stroke;
}

.coast-line {
    stroke: #8aa9a0;
    stroke-width: 3;
}

.coast-line.purple {
    stroke: #9a9ab8;
    stroke-dasharray: 14 3;
}

.road {
    stroke: #f0c78f;
    stroke-width: 4;
}

.track {
    stroke: #b9b9b4;
    stroke-width: 2.500;
}

.river {
    stroke: #a9d1e4;
    stroke-width: 3;
}

.ferry {
    stroke: #7e96e8;
    stroke-width: 3;
    stroke-dasharray: 15 17;
}

.border {
    stroke: #8fb9a0;
    stroke-width: 4;
}

.border.thin {
    stroke-width: 2.500;
}

.shield {
    fill: #f8e4cf;
    stroke: #d9b48e;
    stroke-width: 5;
}

.shield-text {
    font-family: "Liberation Sans", sans-serif;
    font-size: 70px;
    text-anchor: middle;
    fill: #4f4436;
}

use[href="#t3"],
use[href="#t5"],
use[href="#t6"] {
    fill: #c4864f;
}

.place {
    font-family: "Noto Sans", sans-serif;
    font-size: 30px;
    font-style: italic;
    text-anchor: middle;
    fill: #2a2a2a;
    stroke: #fff;
    stroke-width: 2;
    paint-order: stroke;
}

.ring {
    fill: rgba(226, 115, 70, .45);
    stroke: #e6231a;
    stroke-width: 5;
}

.pin-shadow {
    fill: rgba(0, 0, 0, .25);
    filter: url(#soft);
}

.zoom-ctl {
    position: absolute;
    left: 22px;
    top: 20px;
    display: flex;
    flex-direction: column;
    border: 4px solid rgba(0, 0, 0, .2);
    border-radius: 8px;
    background-clip: padding-box;
}

.zoom-btn {
    width: 60px;
    height: 60px;
    display: flex;
    align-items: center;
    justify-content: center;
    padding-top: 10px;
    background: #fff;
    font-family: "Liberation Sans", sans-serif;
    font-size: 46px;
    font-weight: 700;
    color: #000;
}

.zoom-btn:first-child {
    border-bottom: 2px solid #ccc;
    border-radius: 4px 4px 0 0;
}

.zoom-btn:last-child {
    border-radius: 0 0 4px 4px;
}

.popup {
    position: absolute;
    left: 530px;
    top: 422px;
    width: 537px;
    height: 384px;
    padding: 18px 14px 0;
    border-radius: 8px;
    background: rgba(250, 252, 255, .93);
    box-shadow: 0 3px 14px rgba(0, 0, 0, .4);
    font-size: 23px;
    color: #333;
}

.popup::before {
    content: "";
    position: absolute;
    left: -10px;
    top: 176px;
    border-style: solid;
    border-width: 13px 10px 13px 0;
    border-color: transparent rgba(250, 252, 255, .93) transparent transparent;
}

.popup-title {
    display: block;
    height: 40px;
    font-size: 24px;
    font-weight: 700;
    color: #111;
}

.popup-row {
    height: 52px;
    display: grid;
    grid-template-columns: 276px 67px 87px auto;
    align-items: center;
    padding-left: 10px;
}

.popup-row a {
    color: #111;
    white-space: nowrap;
}

.popup-row.picked {
    background: rgba(252, 241, 198, .95);
}

.popup-row.alt {
    background: #f1f5f9;
}

.popup-row b {
    font-weight: 700;
    white-space: nowrap;
}

.attribution {
    position: absolute;
    right: 0;
    bottom: 0;
    height: 33px;
    padding: 0 10px;
    background: rgba(255, 255, 255, .8);
    font-family: "Liberation Sans", sans-serif;
    font-size: 24.4px;
    line-height: 33px;
    color: #333;
    white-space: nowrap;
}

.attribution a {
    color: #0078a8;
    text-decoration: none;
}

.attribution svg {
    width: 25px;
    height: 17px;
    margin-right: 0;
    vertical-align: -1px;
}

.attr-sep {
    color: #555;
}

/* filters panel */
.filters {
    flex: 1;
    min-width: 0;
    background: #fff;
}

.group {
    display: flex;
    flex-direction: column;
    gap: 16px;
    padding: 17px 16px 16px 18px;
    border-bottom: 2px solid #cbd5e1;
}

.group.tall {
    padding-bottom: 32px;
}

.group.last {
    padding-top: 16px;
    border-bottom: 0;
}

.group h3 {
    margin: 0 0 7px;
    font-size: 25px;
    line-height: 32px;
    font-weight: 700;
}

.group h3 + .btn-row,
.group h3 + .grade-row,
.group h3 + div {
    margin-top: -16px;
}

.btn-row {
    display: flex;
    gap: 8px;
}

.field {
    display: block;
    width: 100%;
    height: 48px;
    padding: 0 9px;
    border: 0;
    border-radius: 10px;
    background-color: #cbd5e1;
    color: #1e293b;
    font: inherit;
}

.pick {
    appearance: none;
    padding: 0 26px 0 16px;
    background-image: url("data:image/svg+xml,%3Csvg xmlns='http://www.w3.org/2000/svg' viewBox='0 0 18 12'%3E%3Cpath d='M1 2l8 8 8-8' fill='none' stroke='%231e293b' stroke-width='2'/%3E%3C/svg%3E");
    background-repeat: no-repeat;
    background-position: right 6px center;
    background-size: 18px 12px;
}

.search-box {
    height: 48px;
    display: flex;
    align-items: center;
    gap: 15px;
    padding-left: 9px;
    border-radius: 10px;
    background: #cbd5e1;
}

.search-box svg {
    width: 24px;
    height: 26px;
    flex: none;
}

.bare {
    flex: 1;
    min-width: 0;
    border: 0;
    background: none;
    color: #1e293b;
    font: inherit;
}

.within {
    display: flex;
    align-items: flex-end;
    gap: 17px;
    height: 48px;
}

.within span {
    margin-bottom: -1px;
}

.within-input {
    width: 286px;
}

.grade-row {
    display: grid;
    grid-template-columns: 243px 144px 144px 49px;
    gap: 9px;
}

.blue-btn {
    border: 0;
    border-radius: 10px;
    background: #4a83ee;
    color: #fff;
    font: inherit;
}

.x-btn {
    height: 48px;
    display: flex;
    align-items: center;
    justify-content: center;
    padding: 0;
}

.x-btn svg {
    width: 20px;
    height: 20px;
    fill: none;
    stroke: #fff;
    stroke-width: 2.200;
}

.add-btn {
    width: 99px;
    height: 48px;
    padding: 0;
}

.two-col {
    display: grid;
    grid-template-columns: 1fr 1fr;
    gap: 9px;
}

.two-col.stars-col {
    grid-template-columns: 296px 302px;
}

.search-btn {
    width: 100%;
    height: 56px;
    font-size: 26px;
}
```
